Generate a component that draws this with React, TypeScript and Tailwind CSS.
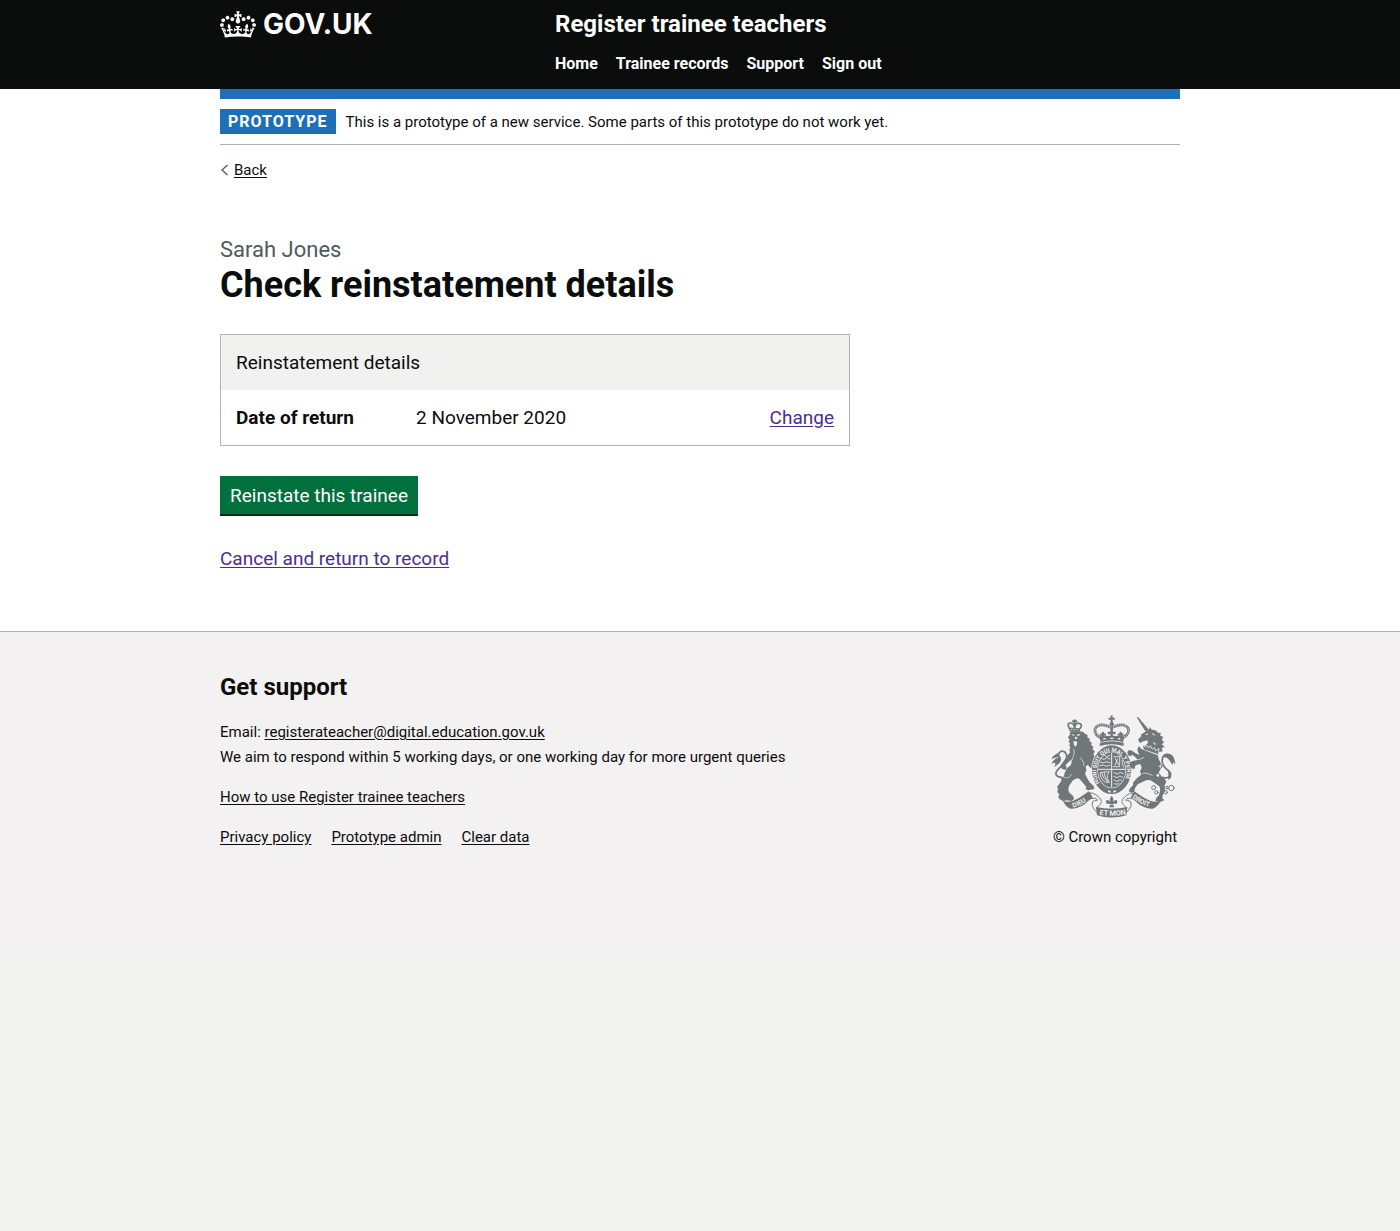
import React from "react";

function Crown() {
  return (
    <svg viewBox="0 0 132 97" className="h-[27px] w-9" fill="currentColor" aria-hidden="true">
      <path
        fillRule="evenodd"
        d="M25 30.2c3.5 1.5 7.7-.2 9.1-3.7 1.5-3.6-.2-7.8-3.9-9.2-3.6-1.4-7.6.3-9.1 3.9-1.4 3.5.3 7.5 3.9 9zM9 39.5c3.6 1.5 7.8-.2 9.2-3.7 1.5-3.6-.2-7.8-3.9-9.1-3.6-1.5-7.6.2-9.1 3.8-1.4 3.5.3 7.5 3.8 9zM4.4 57.2c3.5 1.5 7.7-.2 9.1-3.8 1.5-3.6-.2-7.7-3.9-9.1-3.5-1.5-7.6.3-9.1 3.8-1.4 3.5.3 7.6 3.9 9.1zm38.3-21.4c3.5 1.5 7.7-.2 9.1-3.8 1.5-3.6-.2-7.7-3.9-9.1-3.6-1.5-7.6.3-9.1 3.8-1.3 3.6.4 7.7 3.9 9.1zm64.4-5.6c-3.6 1.5-7.8-.2-9.1-3.7-1.5-3.6.2-7.8 3.8-9.2 3.6-1.4 7.7.3 9.2 3.9 1.3 3.5-.4 7.5-3.9 9zm15.9 9.3c-3.6 1.5-7.7-.2-9.1-3.7-1.5-3.6.2-7.8 3.7-9.1 3.6-1.5 7.7.2 9.2 3.8 1.5 3.5-.3 7.5-3.8 9zm4.7 17.7c-3.6 1.5-7.8-.2-9.2-3.8-1.5-3.6.2-7.7 3.9-9.1 3.6-1.5 7.7.3 9.2 3.8 1.3 3.5-.4 7.6-3.9 9.1zM89.3 35.8c-3.6 1.5-7.8-.2-9.2-3.8-1.4-3.6.2-7.7 3.9-9.1 3.6-1.5 7.7.3 9.2 3.8 1.4 3.6-.3 7.7-3.9 9.1zM69.7 17.7l8.9 4.7V9.3l-8.9 2.8c-.2-.3-.5-.6-.9-.9L72.4 0H59.6l3.5 11.2c-.3.3-.6.5-.9.9l-8.8-2.8v13.1l8.8-4.7c.3.3.6.7.9.9l-5 15.4v.1c-.2.8-.4 1.6-.4 2.4 0 4.1 3.1 7.5 7 8.1h.2c.3 0 .7.1 1 .1.4 0 .7 0 1-.1h.2c4-.6 7.1-4.1 7.1-8.1 0-.8-.1-1.7-.4-2.4V34l-5.1-15.4c.4-.2.7-.6 1-.9zM66 92.8c16.9 0 32.8 1.1 47.1 3.2 4-16.9 8.9-26.7 14-33.5l-9.6-3.4c1 4.9 1.1 7.2 0 10.2-1.5-1.4-3-4.3-4.2-8.7L108.6 76c2.8-2 5-3.2 7.5-3.3-4.4 9.4-10 11.9-13.6 11.2-4.3-.8-6.3-4.6-5.6-7.9 1-4.7 5.7-5.9 8-.5 4.3-8.7-3-11.4-7.6-8.8 7.1-7.2 7.9-13.5 2.1-21.1-8 6.1-8.1 12.3-4.5 20.8-4.7-5.4-12.1-2.5-9.5 6.2 3.4-5.2 7.9-2 7.2 3.1-.6 4.3-6.4 7.8-13.5 7.2-10.3-.9-10.9-8-11.2-13.8 2.5-.5 7.1 1.8 11 7.3L80.2 60c-4.1 4.4-8 5.3-12.3 5.4 1.4-4.4 8-11.6 8-11.6H55.5s6.4 7.2 7.9 11.6c-4.2-.1-8-1-12.3-5.4l1.4 16.4c3.9-5.5 8.5-7.7 10.9-7.3-.3 5.8-.9 12.8-11.1 13.8-7.2.6-12.9-2.9-13.5-7.2-.7-5 3.8-8.3 7.1-3.1 2.7-8.7-4.6-11.6-9.4-6.2 3.7-8.5 3.6-14.7-4.6-20.8-5.8 7.6-5 13.9 2.2 21.1-4.7-2.6-11.9.1-7.7 8.8 2.3-5.5 7.1-4.2 8.1.5.7 3.3-1.3 7.1-5.7 7.9-3.5.7-9-1.8-13.5-11.2 2.5.1 4.7 1.3 7.5 3.3l-4.7-15.4c-1.2 4.4-2.7 7.2-4.3 8.7-1.1-3-.9-5.3 0-10.2l-9.5 3.4c5 6.9 9.9 16.7 14 33.5 14.8-2.1 30.8-3.2 47.7-3.2z"
      />
    </svg>
  );
}

const INK = "#6f7779";
const PAPER = "#f3f1f2";

function RoyalArms() {
  return (
    <svg viewBox="33 30 378 309" className="h-[103px] w-[126px]" role="img" aria-label="Royal coat of arms">
      <g fill={INK} strokeLinejoin="round" strokeLinecap="round">
        {/* lion: crown */}
        <g stroke={INK} strokeWidth="2.5">
          <path fill="none" strokeWidth="5" d="M94 72 C84 62 86 53 95 54 C101 55 105 58 107 65 C109 58 114 53 120 55 C130 57 129 66 120 74" />
          <path fill="none" strokeWidth="6" d="M107 70 V46 M102 49 H112" />
          <path d="M91 69 L122 71 L121 79 L93 77 Z" />
        </g>
        <path fill={PAPER} d="M95 72 l5 1 v2 l-5-1z M104 73 l5 0 v2 h-5z M113 74 l5 0 v2 h-5z" />
        {/* lion: mane, body and legs */}
        <path d="M94 79 L122 79 L132 80 L138 87 L146 90 L145 97 L153 102 L151 108 L159 114 L156 119 L164 127 L160 131 L168 140 L163 146 L168 156 L165 168 L172 176 L178 188 L182 198 L174 204 L168 196 L160 198 L158 190 L151 186 L147 179 L140 184 L142 196 L138 206 L146 222 L152 232 L164 243 L166 252 L156 254 L147 256 L140 252 L142 246 L130 232 L122 222 L114 220 L102 226 L90 242 L88 254 L90 262 L103 274 L105 283 L97 288 L84 286 L72 288 L62 283 L58 276 L61 268 L55 262 L57 250 L54 246 L60 238 L68 226 L66 219 L74 216 L77 204 L84 190 L96 180 L99 164 L92 168 L80 180 L83 188 L80 195 L70 192 L64 186 L66 179 L76 166 L86 151 L93 142 L91 133 L95 127 L90 122 L94 116 L89 110 L92 102 L86 98 L92 90 Z" />
        <path fill={PAPER} d="M98 88 l8 1 l1 3 l-8-1z M114 89 l8-2 l2 3 l-9 3z M107 97 l4-2 l4 2 l-1 5 l-4 1z M103 108 l12 2 l-2 11 l-4 4 l-4-4z" />
        <path fill="none" stroke={PAPER} strokeWidth="2" d="M99 164 C106 150 107 142 104 132 M124 158 L135 174 L134 182 M76 217 C88 222 92 216 97 208" />
        {/* lion: tail */}
        <path fill="none" stroke={INK} strokeWidth="5" d="M69 217 C52 217 46 208 55 196 C64 185 84 170 83 154 C82 139 68 134 61 143 C57 149 59 155 63 158" />
        <path d="M62 156 C52 158 44 164 37 176 C46 172 52 172 48 180 L46 186 C56 178 66 174 66 163 Z M57 144 C48 150 40 152 38 163 C47 157 54 158 61 154 Z" />

        {/* central crown */}
        <g stroke={INK} strokeWidth="3" fill="none">
          <path strokeWidth="6" d="M218 34 V50 M211 41 H225" />
          <circle cx="218" cy="57" r="5" fill={INK} />
          <path d="M187 99 C162 88 162 66 183 60 C200 57 210 65 218 68 C226 65 236 57 253 60 C275 66 274 88 249 99" strokeWidth="8" />
          <path d="M187 99 C162 88 162 66 183 60 C200 57 210 65 218 68 C226 65 236 57 253 60 C275 66 274 88 249 99" stroke={PAPER} strokeWidth="3" strokeDasharray="1 6" />
          <path strokeWidth="7" d="M218 70 V94 M209 84 H227 M192 84 V96 M186 89 H198 M245 84 V96 M239 89 H251" />
        </g>
        <path d="M181 96 Q218 88 256 96 L252 111 Q218 102 185 111 Z M183 113 Q218 104 254 113 L254 123 Q218 112 182 123 Z" />
        <path fill={PAPER} d="M193 100 l7-1 v4 l-7 1z M214 98 h9 v4 h-9z M237 99 l7 1 v4 l-7-1z" />

        {/* garter and shield */}
        <ellipse cx="218" cy="194" rx="61" ry="75" fill={PAPER} />
        <ellipse cx="218" cy="194" rx="59" ry="73" />
        <ellipse cx="218" cy="195" rx="43" ry="55" fill={PAPER} />
        <ellipse cx="218" cy="195" rx="41" ry="53" />
        <path id="garter" fill="none" d="M184 237 A46 58 0 1 1 252 237" />
        <text fill={PAPER} className="text-[17px] font-bold">
          <textPath href="#garter" startOffset="4">HONI SOIT QUI MAL Y PENSE</textPath>
        </text>
        <g stroke={PAPER} strokeWidth="2.5" fill="none">
          <path strokeWidth="3" d="M218 145 V246 M178 193 H258" />
          <path d="M187 159 l8 5 l8-6 l10 4 M183 170 l9 4 l9-4 l12 3 M183 182 l10-2 l8 4 l11-3 M197 151 l5 4 l10-3" />
          <path d="M224 155 H242 V185 H224 M229 161 l10 18 M249 166 l4 20 M235 162 l-6 18" />
          <path d="M184 203 C184 224 195 234 211 232 C203 222 203 210 210 201 Z M189 204 C191 217 198 226 207 230 M196 203 C196 213 200 221 206 226" />
          <path d="M225 203 l10 4 l9-5 l9 4 M225 214 l9 4 l9-5 l8 4 M225 225 l9 4 l9-5 l4 2 M226 236 l8 2 l6-4" />
        </g>
        <path fill={PAPER} d="M207 256 l8 2 v5 l-8-2z M223 258 l8-2 v5 l-8 2z" />

        {/* unicorn: horn and head */}
        <path d="M293 37 L298 37 L330 75 L319 79 Z" />
        <path d="M319 80 L330 73 L333 66 L338 74 L349 76 L357 83 L366 84 L363 91 L373 97 L368 104 L375 111 L369 118 L377 127 L368 128 L371 139 L361 141 L357 151 L348 143 L328 136 L312 130 L318 121 L327 114 L325 106 L313 109 L303 114 L299 109 L298 101 L305 96 L307 88 Z" />
        <path fill={PAPER} d="M320 87 l8-1 l-3 4 l-5 0z M338 83 l7 4 l4 6 l-7-4z M342 110 l7 5 l2 5 l-6-3z" />
        {/* unicorn: collar */}
        <path d="M311 119 L319 125 L322 119 L329 129 L334 122 L340 133 L346 127 L350 137 L360 131 L358 149 L314 134 Z" stroke={PAPER} strokeWidth="2.5" />
        {/* unicorn: body and legs */}
        <path d="M307 132 L356 151 L360 164 L366 176 L365 191 L359 203 L366 213 L377 222 L382 230 L377 241 L378 257 L371 271 L370 280 L376 286 L362 292 L349 287 L352 279 L360 270 L364 254 L361 244 L348 235 L335 226 L323 225 L310 231 L296 238 L288 250 L285 261 L277 263 L269 258 L274 249 L282 241 L282 233 L294 219 L307 209 L303 199 L308 188 L304 177 L290 181 L286 193 L277 189 L271 179 L275 170 L284 167 L295 165 L291 158 L280 149 L275 154 L267 151 L265 141 L270 135 L279 137 L290 145 L302 150 L297 141 L295 132 L300 124 Z" />
        <path fill="none" stroke={PAPER} strokeWidth="2" d="M290 164 C300 164 308 162 314 157 M311 205 C322 202 330 207 340 211" />
        {/* unicorn: tail */}
        <path fill="none" stroke={INK} strokeWidth="5" d="M371 217 C390 223 402 209 389 198 C372 185 366 172 371 158 C376 145 388 146 390 157" />
        <path d="M371 158 C374 143 388 144 397 149 C407 154 406 168 410 178 L402 172 L401 181 L394 170 C389 161 380 154 371 158 Z M388 194 L397 205 L396 218 L388 225 Z" />
        {/* unicorn: chain */}
        <g fill={PAPER} stroke={INK} strokeWidth="3">
          <circle cx="357" cy="211" r="6" />
          <circle cx="344" cy="248" r="6" />
          <circle cx="352" cy="262" r="5" />
          <circle cx="380" cy="262" r="5" />
          <circle cx="384" cy="248" r="4" />
          <circle cx="397" cy="249" r="8" />
          <circle cx="364" cy="184" r="5" />
        </g>

        {/* motto ribbon */}
        <path d="M72 287 C86 294 104 288 121 278 L150 259 L163 279 L150 286 C134 302 116 312 95 311 C84 307 76 298 72 287 Z" />
        <path d="M366 287 C350 294 332 288 315 278 L286 259 L273 279 L286 286 C302 302 320 312 341 311 C352 307 360 298 366 287 Z" />
        <path fill={PAPER} stroke={INK} strokeWidth="3" d="M154 264 C162 262 177 272 185 283 C190 292 184 300 174 307 L176 324 C165 314 158 304 160 294 C160 286 170 288 176 285 C172 280 166 279 161 280 Z" />
        <path fill={PAPER} stroke={INK} strokeWidth="3" d="M282 264 C274 262 259 272 251 283 C246 292 252 300 262 307 L260 324 C271 314 278 304 276 294 C276 286 266 288 260 285 C264 280 270 279 275 280 Z" />
        <path d="M171 306 Q218 317 265 306 L262 331 Q218 344 174 331 Z" />
        <path id="mottoLeft" fill="none" d="M103 308 Q132 299 160 276" />
        <path id="mottoMid" fill="none" d="M176 328 Q218 337 262 328" />
        <path id="mottoRight" fill="none" d="M279 279 Q308 303 350 309" />
        <g fill={PAPER} className="text-[20px] font-bold">
          <text><textPath href="#mottoLeft">DIEU</textPath></text>
          <text className="text-[22px]"><textPath href="#mottoMid" startOffset="5">ET MON</textPath></text>
          <text><textPath href="#mottoRight">DROIT</textPath></text>
        </g>
        {/* fleur-de-lis */}
        <path d="M218 272 C225 281 224 287 221 293 C226 283 235 283 235 291 C235 297 229 298 226 295 L223 299 L225 307 H211 L213 299 L210 295 C207 298 201 297 201 291 C201 283 210 283 215 293 C212 287 211 281 218 272 Z" />
        <path fill={PAPER} d="M211 297 h14 v2 h-14z" />
      </g>
    </svg>
  );
}

const navItems = ["Home", "Trainee records", "Support", "Sign out"];
const metaLinks = ["Privacy policy", "Prototype admin", "Clear data"];
const container = "mx-auto max-w-[960px] max-[1020px]:mx-[30px]";
const footerLink = "underline underline-offset-2";

export default function App() {
  return (
    <div className="flex min-h-screen flex-col bg-[#f2f2f0] font-['Roboto',sans-serif] text-[#0b0c0c]">
      <header className="bg-[#0b0c0c] text-white">
        <div className={`${container} flex flex-wrap pt-2`}>
          <div className="w-[335px]">
            <a href="#" className="flex items-center gap-[7px]">
              <Crown />
              <span className="font-['Inter',sans-serif] text-[28px] leading-8 font-bold">GOV.UK</span>
            </a>
          </div>
          <div className="flex-1 pb-2">
            <a href="#" className="block text-2xl leading-8 font-bold">
              Register trainee teachers
            </a>
            <nav aria-label="Menu" className="mt-[7px]">
              <ul className="flex flex-wrap gap-x-[18px] py-2">
                {navItems.map((item) => (
                  <li key={item}>
                    <a href="#" className="block text-base leading-[18px] font-bold">
                      {item}
                    </a>
                  </li>
                ))}
              </ul>
            </nav>
          </div>
        </div>
      </header>

      <div className="border-b border-[#b1b4b6] bg-white">
        <div className={container}>
          <div className="h-2.5 bg-[#1d70b8]" />
          <div className="flex items-center gap-2.5 border-b border-[#b1b4b6] py-2.5">
            <strong className="bg-[#1d70b8] px-2 text-base leading-[25px] font-bold tracking-[1px] text-white">
              PROTOTYPE
            </strong>
            <span className="text-[15px] leading-5">
              This is a prototype of a new service. Some parts of this prototype do not work yet.
            </span>
          </div>
          <a href="#" className="mt-[15px] inline-flex items-center gap-1 text-[15px] leading-5">
            <svg viewBox="0 0 10 12" className="h-3 w-2.5" fill="none" stroke="#505a5f" strokeWidth="1.3" aria-hidden="true">
              <path d="M7.5 1 L2 6 L7.5 11" />
            </svg>
            <span className="underline underline-offset-2">Back</span>
          </a>

          <main className="max-w-[630px] pt-[52px] pb-[60px]">
            <h1 className="text-4xl leading-10 font-bold">
              <span className="block text-[22px] leading-[30px] font-normal text-[#505a5f]">Sarah Jones</span>
              Check reinstatement details
            </h1>
            <section className="mt-[29px] border border-[#b1b4b6] text-[19px] leading-[25px]">
              <h2 className="bg-[#f1f1ef] p-[15px]">Reinstatement details</h2>
              <dl className="flex p-[15px]">
                <dt className="w-[180px] font-bold">Date of return</dt>
                <dd className="flex-1">2 November 2020</dd>
                <dd>
                  <a href="#" className="text-[#4c2c92] underline underline-offset-2">
                    Change
                  </a>
                </dd>
              </dl>
            </section>
            <button
              type="button"
              className="mt-[30px] block border-b-2 border-[#002d18] bg-[#00703c] px-2.5 pt-[9px] pb-2 text-[19px] leading-[21px] text-white"
            >
              Reinstate this trainee
            </button>
            <p className="mt-[30px] text-[19px] leading-[25px]">
              <a href="#" className="text-[#4c2c92] underline underline-offset-2">
                Cancel and return to record
              </a>
            </p>
          </main>
        </div>
      </div>

      <footer className="bg-[#f3f1f2] pt-10 pb-[105px] text-[15px] leading-5">
        <div className={`${container} flex flex-wrap items-end justify-between`}>
          <div>
            <h2 className="text-2xl leading-[30px] font-bold">Get support</h2>
            <div className="mt-[18px] leading-[25px]">
              <p>
                Email:{" "}
                <a href="#" className={footerLink}>
                  registerateacher@digital.education.gov.uk
                </a>
              </p>
              <p>We aim to respond within 5 working days, or one working day for more urgent queries</p>
            </div>
            <p className="mt-[17px]">
              <a href="#" className={footerLink}>
                How to use Register trainee teachers
              </a>
            </p>
            <ul className="mt-5 flex gap-5">
              {metaLinks.map((link) => (
                <li key={link}>
                  <a href="#" className={footerLink}>
                    {link}
                  </a>
                </li>
              ))}
            </ul>
          </div>
          <a href="#" className="flex w-[130px] flex-col gap-[9px]">
            <RoyalArms />
            <span className="text-center whitespace-nowrap">© Crown copyright</span>
          </a>
        </div>
      </footer>
    </div>
  );
}
